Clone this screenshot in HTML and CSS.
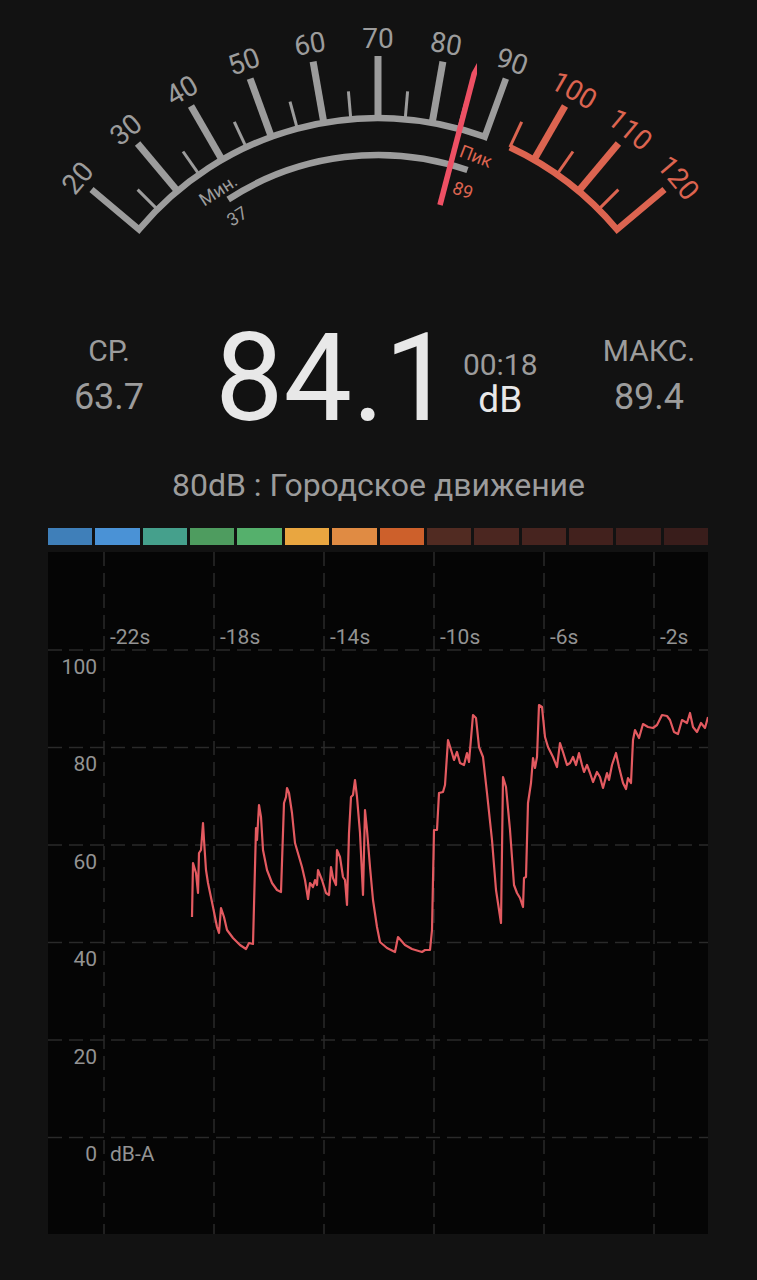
FILE: index.html
```html
<!DOCTYPE html>
<html lang="ru">
<head>
    <meta charset="UTF-8">
    <meta name="viewport" content="width=device-width, initial-scale=1.0">
    <title>Шумомер</title>
    <link rel="stylesheet" href="styles.css">
</head>
<body>

<main class="meter">
    <!-- шкала -->
    <svg class="gauge" width="757" height="260" viewBox="0 0 757 260">
        <path class="arc" d="M91.5 189.6 L139 229.5 A312 312 0 0 1 484.7 136.8 L505.9 78.6"/>
        <g class="major">
            <line x1="177.4" y1="191" x2="137.6" y2="143.5"/>
            <line x1="222" y1="159.8" x2="191" y2="106.1"/>
            <line x1="271.3" y1="136.8" x2="250.1" y2="78.6"/>
            <line x1="323.8" y1="122.7" x2="313.1" y2="61.7"/>
            <line x1="378" y1="118" x2="378" y2="56"/>
            <line x1="432.2" y1="122.7" x2="442.9" y2="61.7"/>
        </g>
        <g class="minor">
            <line x1="157.4" y1="209.4" x2="137.6" y2="189.6"/>
            <line x1="199" y1="174.4" x2="183" y2="151.5"/>
            <line x1="246.1" y1="147.2" x2="234.3" y2="121.9"/>
            <line x1="297.3" y1="128.6" x2="290" y2="101.6"/>
            <line x1="350.8" y1="119.2" x2="348.4" y2="91.3"/>
            <line x1="405.2" y1="119.2" x2="407.6" y2="91.3"/>
            <line x1="458.7" y1="128.6" x2="466" y2="101.6"/>
        </g>

        <path class="arc arc-red" d="M509.9 147.2 A312 312 0 0 1 617 229.5 L664.5 189.6"/>
        <g class="major major-red">
            <line x1="534" y1="159.8" x2="565" y2="106.1"/>
            <line x1="578.6" y1="191" x2="618.4" y2="143.5"/>
        </g>
        <g class="minor minor-red">
            <line x1="509.9" y1="147.2" x2="521.7" y2="121.9"/>
            <line x1="557" y1="174.4" x2="573" y2="151.5"/>
            <line x1="598.6" y1="209.4" x2="618.4" y2="189.6"/>
        </g>

        <g class="num">
            <text x="77.7" y="178" transform="rotate(-50 77.7 178)">20</text>
            <text x="126" y="129.7" transform="rotate(-40 126 129.7)">30</text>
            <text x="182" y="90.5" transform="rotate(-30 182 90.5)">40</text>
            <text x="243.9" y="61.6" transform="rotate(-20 243.9 61.6)">50</text>
            <text x="309.9" y="44" transform="rotate(-10 309.9 44)">60</text>
            <text x="378" y="38">70</text>
            <text x="446.1" y="44" transform="rotate(10 446.1 44)">80</text>
            <text x="512.1" y="61.6" transform="rotate(20 512.1 61.6)">90</text>
        </g>
        <g class="num num-red">
            <text x="574" y="90.5" transform="rotate(30 574 90.5)">100</text>
            <text x="630" y="129.7" transform="rotate(40 630 129.7)">110</text>
            <text x="678.3" y="178" transform="rotate(50 678.3 178)">120</text>
        </g>

        <!-- мин / пик -->
        <path class="range" d="M228.2 199.4 A275 275 0 0 1 467.5 170"/>
        <g class="mark">
            <text x="218" y="190" transform="rotate(-33 218 190)">Мин.</text>
            <text x="237" y="216" transform="rotate(-33 237 216)">37</text>
        </g>
        <g class="mark mark-red">
            <text x="476" y="156" transform="rotate(21 476 156)">Пик</text>
            <text x="463" y="190" transform="rotate(20 463 190)">89</text>
        </g>

        <polygon class="needle" points="437.3,204.3 442.7,205.7 477,74.1 477,63 471.6,72.7"/>
    </svg>

    <section class="stats">
        <div class="stat">
            <div class="stat-label">СР.</div>
            <div class="stat-value">63.7</div>
        </div>
        <div class="reading">84.1</div>
        <div class="units">
            <div class="timer">00:18</div>
            <div class="unit">dB</div>
        </div>
        <div class="stat stat-max">
            <div class="stat-label">МАКС.</div>
            <div class="stat-value">89.4</div>
        </div>
    </section>

    <p class="caption">80dB : Городское движение</p>

    <div class="levels">
        <span class="lv lv1"></span>
        <span class="lv lv2"></span>
        <span class="lv lv3"></span>
        <span class="lv lv4"></span>
        <span class="lv lv5"></span>
        <span class="lv lv6"></span>
        <span class="lv lv7"></span>
        <span class="lv lv8"></span>
        <span class="lv lv9"></span>
        <span class="lv lv10"></span>
        <span class="lv lv11"></span>
        <span class="lv lv12"></span>
        <span class="lv lv13"></span>
        <span class="lv lv14"></span>
    </div>

    <!-- график последних секунд -->
    <div class="chart">
        <svg width="660" height="682" viewBox="48 552 660 682">
            <g class="grid">
                <line x1="104" y1="552" x2="104" y2="1234"/>
                <line x1="214" y1="552" x2="214" y2="1234"/>
                <line x1="324" y1="552" x2="324" y2="1234"/>
                <line x1="434" y1="552" x2="434" y2="1234"/>
                <line x1="544" y1="552" x2="544" y2="1234"/>
                <line x1="654" y1="552" x2="654" y2="1234"/>
                <line x1="48" y1="650" x2="708" y2="650"/>
                <line x1="48" y1="747.5" x2="708" y2="747.5"/>
                <line x1="48" y1="845" x2="708" y2="845"/>
                <line x1="48" y1="942.5" x2="708" y2="942.5"/>
                <line x1="48" y1="1040" x2="708" y2="1040"/>
                <line x1="48" y1="1137.5" x2="708" y2="1137.5"/>
            </g>
            <g class="axis">
                <text x="110" y="637">-22s</text>
                <text x="220" y="637">-18s</text>
                <text x="330" y="637">-14s</text>
                <text x="440" y="637">-10s</text>
                <text x="550" y="637">-6s</text>
                <text x="660" y="637">-2s</text>
            </g>
            <g class="axis axis-y">
                <text x="97" y="666.5">100</text>
                <text x="97" y="764">80</text>
                <text x="97" y="861.5">60</text>
                <text x="97" y="959">40</text>
                <text x="97" y="1056.5">20</text>
                <text x="97" y="1154">0</text>
            </g>
            <text class="axis" x="110" y="1154">dB-A</text>
            <polyline class="trace" points="192,917 193,863 196,873 198,893 199,853 201,850 203,823 204,840 206,870 208,883 213,907 217,927 219,933 221,908 224,917 227,930 233,938 240,945 246,949 249,943 253,944 256,828 257,840 259,805 261,817 263,850 267,870 272,883 277,890 281,892 284,803 286,797 287,788 289,793 292,813 295,843 302,867 305,880 308,899 310,883 313,887 315,880 317,885 318,870 322,880 326,893 329,895 331,867 333,878 336,885 337,850 340,857 343,877 345,880 347,905 349,833 351,797 353,795 355,780 357,797 360,833 363,895 365,810 367,830 370,867 373,900 377,927 380,942 387,948 395,952 398,937 405,945 412,949 422,952 425,950 430,950 432,930 434,830 437,830 439,793 443,792 445,785 448,740 452,753 454,760 457,752 460,763 464,765 467,753 469,762 473,715 476,718 479,747 483,757 487,793 492,840 496,890 501,923 503,777 506,787 510,830 514,885 517,893 520,898 523,907 524,878 526,877 528,803 531,783 533,758 535,768 537,757 539,705 542,707 545,737 548,747 553,757 557,767 560,743 563,752 567,765 570,763 573,757 576,765 579,753 582,765 584,772 587,765 590,773 593,782 597,772 600,777 603,788 607,773 609,780 612,765 616,753 619,767 623,783 626,789 628,778 631,783 633,740 635,730 639,738 643,724 648,727 653,728 657,725 662,715 667,716 670,720 674,732 678,734 682,720 687,723 690,713 693,727 697,732 701,723 705,728 708,717"/>
        </svg>
    </div>
</main>

</body>
</html>
```

FILE: styles.css
```css
body {
    margin: 0;
    background-color: #121212;
    font-family: Roboto, "Noto Sans", sans-serif;
    color: #9c9c9c;
}

.meter {
    width: 757px;
    height: 1280px;
    overflow: hidden;
}

/* шкала */
.gauge {
    display: block;
}

.arc, .range {
    fill: none;
    stroke: #9c9c9c;
    stroke-width: 6.5;
    stroke-linejoin: miter;
}

.arc-red {
    stroke: #dc6450;
}

.major line {
    stroke: #9c9c9c;
    stroke-width: 7;
}

.minor line {
    stroke: #9c9c9c;
    stroke-width: 3;
}

.major-red line, .minor-red line {
    stroke: #dc6450;
}

.num text {
    fill: #9c9c9c;
    font-size: 28px;
    text-anchor: middle;
    dominant-baseline: central;
}

.num-red text {
    fill: #dc6450;
}

.mark text {
    fill: #9c9c9c;
    font-size: 18px;
    text-anchor: middle;
    dominant-baseline: central;
}

.mark-red text {
    fill: #dc6450;
}

.needle {
    fill: #ee5064;
}

/* показания */
.stats {
    display: flex;
    align-items: center;
    height: 122px;
    margin-top: 58px;
    padding-left: 34px;
}

.stat {
    width: 150px;
    text-align: center;
}

.stat-max {
    margin-left: auto;
    margin-right: 33px;
}

.stat-label {
    font-size: 30px;
    line-height: 36px;
}

.stat-value {
    font-size: 36px;
    line-height: 57px;
}

.reading {
    margin-left: 31px;
    font-size: 122px;
    line-height: 122px;
    color: #e8e8e8;
}

.units {
    margin-left: 10px;
    text-align: center;
}

.timer {
    font-size: 30px;
    line-height: 42px;
}

.unit {
    font-size: 37px;
    line-height: 28px;
    color: #e8e8e8;
}

.caption {
    margin: 25px 0 0;
    font-size: 32px;
    line-height: 40px;
    text-align: center;
}

/* цветовая полоса уровней */
.levels {
    display: flex;
    gap: 3px;
    height: 17px;
    margin: 23px 49px 0 48px;
}

.lv {
    flex: 1;
}

.lv1 { background-color: #3f7fb9; }
.lv2 { background-color: #4a92d6; }
.lv3 { background-color: #45a08c; }
.lv4 { background-color: #4e9c5f; }
.lv5 { background-color: #55b06c; }
.lv6 { background-color: #e9a640; }
.lv7 { background-color: #e08b43; }
.lv8 { background-color: #cd602b; }
.lv9 { background-color: #512b22; }
.lv10 { background-color: #4b2620; }
.lv11 { background-color: #47241f; }
.lv12 { background-color: #42211d; }
.lv13 { background-color: #3d1f1c; }
.lv14 { background-color: #391d1b; }

/* график */
.chart {
    width: 660px;
    height: 682px;
    margin: 7px 0 0 48px;
    background-color: #050505;
}

.chart svg {
    display: block;
}

.grid line {
    stroke: #2a2a2a;
    stroke-width: 1.5;
    stroke-dasharray: 14 7;
}

.axis text, text.axis {
    fill: #939393;
    font-size: 21px;
    dominant-baseline: central;
}

.axis-y text {
    text-anchor: end;
}

.trace {
    fill: none;
    stroke: #e35a60;
    stroke-width: 2.2;
    stroke-linejoin: round;
}
```
